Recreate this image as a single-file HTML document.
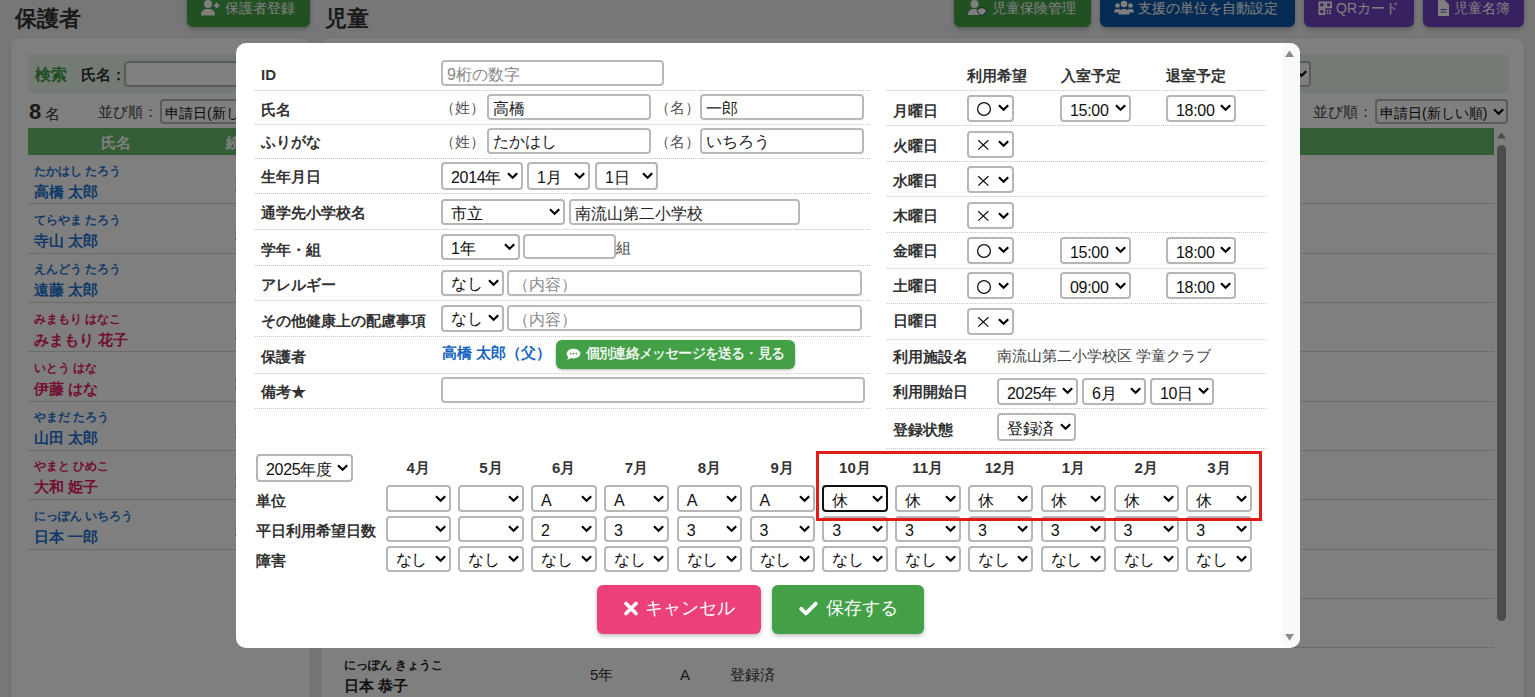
<!DOCTYPE html><html><head><meta charset="utf-8"><style>
*{margin:0;padding:0;box-sizing:border-box}
html,body{width:1535px;height:697px;overflow:hidden}
body{font-family:"Liberation Sans",sans-serif;background:#eeeeee;position:relative;color:#333}
.abs{position:absolute}
.t{position:absolute;height:30px;line-height:30px;margin-top:1.5px;white-space:nowrap;font-size:15px}
.c{text-align:center}
.b{font-weight:bold}
.card{position:absolute;background:#fff;border-radius:10px;box-shadow:0 1px 3px rgba(0,0,0,.12)}
.btn{position:absolute;border-radius:6px;color:#fff;font-size:15px;display:flex;align-items:center;justify-content:center;white-space:nowrap;box-shadow:0 2px 4px rgba(0,0,0,.25)}
.sel{position:absolute;border:2px solid #b6b6b6;border-radius:4px;background:#fff;font-size:16px;color:#111;white-space:nowrap;overflow:hidden}
.sel span{position:absolute;left:8px;top:calc(50% + 2.5px);transform:translateY(-50%);line-height:20px}
.sel .chev{position:absolute;right:3px;top:50%;margin-top:-3.8px}
.sel .mk{position:absolute;top:50%}
.sel span{letter-spacing:-0.3px}
.sel.focus{border-color:#111}
.inp{position:absolute;border:2px solid #b9b9b9;border-radius:4px;background:#fff;font-size:16px;color:#222;white-space:nowrap;overflow:hidden}
.inp span{position:absolute;left:4px;top:calc(50% + 2px);transform:translateY(-50%);line-height:20px}
.inp.ph span{color:#8a8a8a}
.dot{position:absolute;height:0;border-top:1px dotted #c4c4c4}
.sep{position:absolute;height:0;border-top:1px solid #d6d6d6}
#overlay{position:absolute;left:0;top:0;width:1535px;height:697px;background:rgba(0,0,0,.5)}
#modal{position:absolute;left:236px;top:43px;width:1064px;height:605px;background:#fff;border-radius:10px;overflow:hidden}
</style></head><body>
<div class="t b" style="left:15px;top:2px;font-size:22px;color:#333">保護者</div>
<div class="t b" style="left:325px;top:2px;font-size:22px;color:#333">児童</div>
<div class="btn" style="left:187px;top:-10px;width:123px;height:37px;background:#43a047"></div>
<svg class="abs" style="left:200.5px;top:0px" width="20" height="16" viewBox="0 0 20 16"><circle cx="7" cy="4" r="4" fill="#fff"/><path d="M0 15.5C0 10.5 2.5 9 7 9S14 10.5 14 15.5Z" fill="#fff"/><path d="M13 5.5h5.5M15.75 2.75v5.5" stroke="#fff" stroke-width="2.2"/></svg>
<div class="t" style="left:224.5px;top:-7px;margin-top:0;color:#fff;font-size:14px">保護者登録</div>
<div class="btn" style="left:954px;top:-10px;width:137px;height:37px;background:#43a047"></div>
<svg class="abs" style="left:967.5px;top:0px" width="20" height="16" viewBox="0 0 20 16"><circle cx="6.5" cy="4" r="4" fill="#fff"/><path d="M0 15C0 10.5 2.5 9 7 9L11 9L11 15Z" fill="#fff"/><path d="M13.8 7.5L18.5 9C18.5 12.5 16.5 14.5 13.8 15.5C11 14.5 9.2 12.5 9.2 9Z" fill="#fff" stroke="#24522a" stroke-width="1"/></svg>
<div class="t" style="left:992px;top:-7px;margin-top:0;color:#fff;font-size:14px">児童保険管理</div>
<div class="btn" style="left:1100px;top:-10px;width:195px;height:37px;background:#0b57a6"></div>
<svg class="abs" style="left:1113.5px;top:0px" width="20" height="16" viewBox="0 0 20 16"><circle cx="10" cy="4" r="3.3" fill="#fff"/><circle cx="3.5" cy="5.5" r="2.3" fill="#fff"/><circle cx="16.5" cy="5.5" r="2.3" fill="#fff"/><path d="M4.5 14.5C4.5 10.5 6.5 9 10 9S15.5 10.5 15.5 14.5Z" fill="#fff"/><path d="M0 12.5C0 10 1.2 9 3.5 9S6 9.5 6 10V12.5Z" fill="#fff"/><path d="M20 12.5C20 10 18.8 9 16.5 9S14 9.5 14 10V12.5Z" fill="#fff"/></svg>
<div class="t" style="left:1138px;top:-7px;margin-top:0;color:#fff;font-size:14px">支援の単位を自動設定</div>
<div class="btn" style="left:1304px;top:-10px;width:110px;height:37px;background:#6f42c1"></div>
<svg class="abs" style="left:1318px;top:0px" width="20" height="16" viewBox="0 0 20 16"><g transform="translate(0.5,1.5) scale(0.9)"><rect x="1" y="1" width="5.5" height="5.5" fill="none" stroke="#fff" stroke-width="2"/><rect x="8.5" y="1" width="5.5" height="5.5" fill="none" stroke="#fff" stroke-width="2"/><rect x="1" y="8.5" width="5.5" height="5.5" fill="none" stroke="#fff" stroke-width="2"/><rect x="9" y="9" width="2" height="2" fill="#fff"/><rect x="12" y="12" width="2" height="2" fill="#fff"/><rect x="12" y="9" width="2" height="2" fill="#fff"/><rect x="9" y="12" width="2" height="2" fill="#fff"/></g></svg>
<div class="t" style="left:1336px;top:-7px;margin-top:0;color:#fff;font-size:14px">QRカード</div>
<div class="btn" style="left:1423px;top:-10px;width:101px;height:37px;background:#6f42c1"></div>
<svg class="abs" style="left:1436.5px;top:0px" width="20" height="16" viewBox="0 0 20 16"><path d="M1 0H7.5L12 4.5V16H1Z" fill="#fff"/><path d="M3.5 9.5H9.5M3.5 12H9.5" stroke="#6f42c1" stroke-width="1.2"/></svg>
<div class="t" style="left:1454px;top:-7px;margin-top:0;color:#fff;font-size:14px">児童名簿</div>
<div class="card" style="left:11px;top:38px;width:299px;height:700px"></div>
<div class="abs" style="left:28px;top:54px;width:265px;height:39px;background:#e8f5e9;border-radius:4px"></div>
<div class="t b" style="left:35px;top:58px;color:#3f9b45;font-size:16px">検索</div>
<div class="t b" style="left:81px;top:58px;font-size:15px">氏名：</div>
<div class="abs" style="left:124px;top:61px;width:160px;height:26px;border:2px solid #b4b4b4;border-radius:4px;background:#fff"></div>
<div class="t " style="left:29px;top:95.5px;font-size:15px"><b style="font-size:22px">8</b> 名</div>
<div class="t " style="left:98px;top:95.5px;font-size:15px;color:#444">並び順：</div>
<div class="abs" style="left:160px;top:99px;width:140px;height:25px;border:2px solid #b4b4b4;border-radius:4px;background:#fff"></div>
<div class="t " style="left:165px;top:96px;font-size:14px;color:#111">申請日(新しい順)</div>
<div class="abs" style="left:28px;top:128px;width:265px;height:27px;background:#66bb6a"></div>
<div class="t c b" style="left:76px;top:126px;width:80px;color:#fff">氏名</div>
<div class="t b" style="left:226px;top:126px;color:#fff;font-size:15px">続柄</div>
<div class="t b" style="left:34px;top:154.1px;font-size:12px;color:#1f74d0">たかはし たろう</div>
<div class="t b" style="left:34px;top:175.1px;font-size:15px;color:#1f74d0">高橋 太郎</div>
<div class="t " style="left:234px;top:169.6px;font-size:14px;color:#1f74d0">1</div>
<div class="sep" style="left:28px;top:203.39999999999998px;width:265px"></div>
<div class="t b" style="left:34px;top:203.39999999999998px;font-size:12px;color:#1f74d0">てらやま たろう</div>
<div class="t b" style="left:34px;top:224.39999999999998px;font-size:15px;color:#1f74d0">寺山 太郎</div>
<div class="t " style="left:234px;top:218.89999999999998px;font-size:14px;color:#1f74d0">1</div>
<div class="sep" style="left:28px;top:252.7px;width:265px"></div>
<div class="t b" style="left:34px;top:252.7px;font-size:12px;color:#1f74d0">えんどう たろう</div>
<div class="t b" style="left:34px;top:273.7px;font-size:15px;color:#1f74d0">遠藤 太郎</div>
<div class="t " style="left:234px;top:268.2px;font-size:14px;color:#1f74d0">1</div>
<div class="sep" style="left:28px;top:302.0px;width:265px"></div>
<div class="t b" style="left:34px;top:302.0px;font-size:12px;color:#e52062">みまもり はなこ</div>
<div class="t b" style="left:34px;top:323.0px;font-size:15px;color:#e52062">みまもり 花子</div>
<div class="t " style="left:234px;top:317.5px;font-size:14px;color:#e52062">1</div>
<div class="sep" style="left:28px;top:351.3px;width:265px"></div>
<div class="t b" style="left:34px;top:351.29999999999995px;font-size:12px;color:#e52062">いとう はな</div>
<div class="t b" style="left:34px;top:372.29999999999995px;font-size:15px;color:#e52062">伊藤 はな</div>
<div class="t " style="left:234px;top:366.79999999999995px;font-size:14px;color:#e52062">1</div>
<div class="sep" style="left:28px;top:400.59999999999997px;width:265px"></div>
<div class="t b" style="left:34px;top:400.6px;font-size:12px;color:#1f74d0">やまだ たろう</div>
<div class="t b" style="left:34px;top:421.6px;font-size:15px;color:#1f74d0">山田 太郎</div>
<div class="t " style="left:234px;top:416.1px;font-size:14px;color:#1f74d0">1</div>
<div class="sep" style="left:28px;top:449.90000000000003px;width:265px"></div>
<div class="t b" style="left:34px;top:449.9px;font-size:12px;color:#e52062">やまと ひめこ</div>
<div class="t b" style="left:34px;top:470.9px;font-size:15px;color:#e52062">大和 姫子</div>
<div class="t " style="left:234px;top:465.4px;font-size:14px;color:#e52062">1</div>
<div class="sep" style="left:28px;top:499.2px;width:265px"></div>
<div class="t b" style="left:34px;top:499.19999999999993px;font-size:12px;color:#1f74d0">にっぽん いちろう</div>
<div class="t b" style="left:34px;top:520.1999999999999px;font-size:15px;color:#1f74d0">日本 一郎</div>
<div class="t " style="left:234px;top:514.6999999999999px;font-size:14px;color:#1f74d0">1</div>
<div class="sep" style="left:28px;top:548.4999999999999px;width:265px"></div>
<div class="card" style="left:321px;top:38px;width:1203px;height:700px"></div>
<div class="abs" style="left:338px;top:54px;width:1171px;height:39px;background:#e8f5e9;border-radius:4px"></div>
<div class="abs" style="left:1200px;top:60.5px;width:111px;height:26px;border:2px solid #b4b4b4;border-radius:4px;background:#fff"></div>
<div class="t " style="left:1313px;top:95.5px;font-size:15px;color:#444">並び順：</div>
<div class="abs" style="left:1375px;top:99px;width:133px;height:25px;border:2px solid #b4b4b4;border-radius:4px;background:#fff"></div>
<div class="t " style="left:1380px;top:96px;font-size:14px;color:#111">申請日(新しい順)</div>
<div class="abs" style="left:338px;top:128px;width:1156px;height:27px;background:#66bb6a"></div>
<div class="abs" style="left:1497px;top:145px;width:9px;height:476px;background:#999;border-radius:5px"></div>
<svg class="abs" style="left:1497px;top:132px" width="9" height="7"><polygon points="0,6.5 4.5,0.5 9,6.5" fill="#999"/></svg>
<svg class="abs" style="left:1296px;top:70px" width="11" height="8" viewBox="0 0 11 8"><polyline points="1.0,1.3 5.6,5.8 10.2,1.3" fill="none" stroke="#000" stroke-width="2.2"/></svg>
<svg class="abs" style="left:1493px;top:108px" width="11" height="8" viewBox="0 0 11 8"><polyline points="1.0,1.3 5.6,5.8 10.2,1.3" fill="none" stroke="#000" stroke-width="2.2"/></svg>
<div class="sep" style="left:338px;top:203.39999999999998px;width:1156px"></div>
<div class="sep" style="left:338px;top:252.7px;width:1156px"></div>
<div class="sep" style="left:338px;top:302.0px;width:1156px"></div>
<div class="sep" style="left:338px;top:351.3px;width:1156px"></div>
<div class="sep" style="left:338px;top:400.59999999999997px;width:1156px"></div>
<div class="sep" style="left:338px;top:449.90000000000003px;width:1156px"></div>
<div class="sep" style="left:338px;top:499.2px;width:1156px"></div>
<div class="sep" style="left:338px;top:548.4999999999999px;width:1156px"></div>
<div class="sep" style="left:338px;top:597.8px;width:1156px"></div>
<div class="sep" style="left:338px;top:647.0999999999999px;width:1156px"></div>
<div class="t b" style="left:344px;top:648.5px;font-size:12px;color:#222">にっぽん きょうこ</div>
<div class="t b" style="left:344px;top:669px;font-size:15px;color:#222">日本 恭子</div>
<div class="t " style="left:590px;top:658px;font-size:15px;color:#333">5年</div>
<div class="t " style="left:680px;top:658px;font-size:15px;color:#333">A</div>
<div class="t " style="left:730px;top:658px;font-size:15px;color:#333">登録済</div>
<div id="overlay"></div>
<div id="modal"><div class="abs" style="left:1046px;top:0;width:18px;height:602px;background:#f9f9f9"></div></div>
<svg class="abs" style="left:1285px;top:50px" width="9" height="8"><polygon points="0,7 4.5,0.5 9,7" fill="#8c8c8c"/></svg>
<svg class="abs" style="left:1285px;top:633px" width="9" height="8"><polygon points="0,1 4.5,7.5 9,1" fill="#8c8c8c"/></svg>
<div class="dot" style="left:255px;top:90px;width:615px"></div>
<div class="dot" style="left:255px;top:124px;width:615px"></div>
<div class="dot" style="left:255px;top:158px;width:615px"></div>
<div class="dot" style="left:255px;top:193px;width:615px"></div>
<div class="dot" style="left:255px;top:229px;width:615px"></div>
<div class="dot" style="left:255px;top:265px;width:615px"></div>
<div class="dot" style="left:255px;top:300px;width:615px"></div>
<div class="dot" style="left:255px;top:336px;width:615px"></div>
<div class="dot" style="left:255px;top:373px;width:615px"></div>
<div class="dot" style="left:255px;top:408px;width:615px"></div>
<div class="t b" style="left:261px;top:58px;">ID</div>
<div class="t b" style="left:261px;top:93px;">氏名</div>
<div class="t b" style="left:261px;top:125px;">ふりがな</div>
<div class="t b" style="left:261px;top:160.5px;">生年月日</div>
<div class="t b" style="left:261px;top:196px;">通学先小学校名</div>
<div class="t b" style="left:261px;top:233px;">学年・組</div>
<div class="t b" style="left:261px;top:268px;">アレルギー</div>
<div class="t b" style="left:261px;top:304px;">その他健康上の配慮事項</div>
<div class="t b" style="left:261px;top:340px;">保護者</div>
<div class="t b" style="left:261px;top:375px;">備考★</div>
<div class="inp ph" style="left:441px;top:60px;width:223px;height:26px"><span>9桁の数字</span></div>
<div class="t " style="left:448px;top:91px;color:#555;margin-left:-8px">（姓）</div>
<div class="inp" style="left:487px;top:94px;width:164px;height:26px"><span>高橋</span></div>
<div class="t " style="left:655px;top:91px;color:#555">（名）</div>
<div class="inp" style="left:700px;top:94px;width:164px;height:26px"><span>一郎</span></div>
<div class="t " style="left:448px;top:125px;color:#555;margin-left:-8px">（姓）</div>
<div class="inp" style="left:487px;top:128px;width:164px;height:26px"><span style="margin-top:-1.5px">たかはし</span></div>
<div class="t " style="left:655px;top:125px;color:#555">（名）</div>
<div class="inp" style="left:700px;top:128px;width:164px;height:26px"><span style="margin-top:-1.5px">いちろう</span></div>
<div class="sel " style="left:441px;top:162px;width:81.5px;height:27.5px"><span>2014年</span><svg class="chev" width="11" height="8" viewBox="0 0 11 8"><polyline points="1.0,1.3 5.6,5.8 10.2,1.3" fill="none" stroke="#000" stroke-width="2.2"/></svg></div>
<div class="sel " style="left:527px;top:162px;width:63px;height:27.5px"><span>1月</span><svg class="chev" width="11" height="8" viewBox="0 0 11 8"><polyline points="1.0,1.3 5.6,5.8 10.2,1.3" fill="none" stroke="#000" stroke-width="2.2"/></svg></div>
<div class="sel " style="left:595px;top:162px;width:63px;height:27.5px"><span>1日</span><svg class="chev" width="11" height="8" viewBox="0 0 11 8"><polyline points="1.0,1.3 5.6,5.8 10.2,1.3" fill="none" stroke="#000" stroke-width="2.2"/></svg></div>
<div class="sel " style="left:441px;top:198.5px;width:124px;height:26.5px"><span>市立</span><svg class="chev" width="11" height="8" viewBox="0 0 11 8"><polyline points="1.0,1.3 5.6,5.8 10.2,1.3" fill="none" stroke="#000" stroke-width="2.2"/></svg></div>
<div class="inp" style="left:569px;top:199px;width:231px;height:25.5px"><span>南流山第二小学校</span></div>
<div class="sel " style="left:441px;top:233.5px;width:78.5px;height:26.80000000000001px"><span>1年</span><svg class="chev" width="11" height="8" viewBox="0 0 11 8"><polyline points="1.0,1.3 5.6,5.8 10.2,1.3" fill="none" stroke="#000" stroke-width="2.2"/></svg></div>
<div class="inp" style="left:523px;top:234.3px;width:92.5px;height:25.19999999999999px"><span></span></div>
<div class="t " style="left:616px;top:231px;color:#444">組</div>
<div class="sel " style="left:441px;top:269.5px;width:62.5px;height:26.5px"><span style="margin-top:-1.5px">なし</span><svg class="chev" width="11" height="8" viewBox="0 0 11 8"><polyline points="1.0,1.3 5.6,5.8 10.2,1.3" fill="none" stroke="#000" stroke-width="2.2"/></svg></div>
<div class="inp ph" style="left:507px;top:270px;width:354.5px;height:25.5px"><span>（内容）</span></div>
<div class="sel " style="left:441px;top:305px;width:62.5px;height:26.5px"><span style="margin-top:-1.5px">なし</span><svg class="chev" width="11" height="8" viewBox="0 0 11 8"><polyline points="1.0,1.3 5.6,5.8 10.2,1.3" fill="none" stroke="#000" stroke-width="2.2"/></svg></div>
<div class="inp ph" style="left:507px;top:305px;width:354.5px;height:25.5px"><span>（内容）</span></div>
<div class="t b" style="left:442px;top:336.5px;color:#1565c0">高橋 太郎（父）</div>
<div class="btn" style="left:556px;top:340px;width:239px;height:29px;background:#43a047;box-shadow:0 1px 3px rgba(0,0,0,.3)"></div>
<svg class="abs" style="left:566px;top:348px" width="15" height="12" viewBox="0 0 15 12"><path d="M7.5 0.8C11.4 0.8 14.3 3 14.3 5.6C14.3 8.3 11.4 10.4 7.5 10.4C6.6 10.4 5.8 10.3 5 10.1C4 11 2.6 11.6 0.8 11.7C1.8 10.9 2.3 10 2.4 9.2C1.3 8.3 0.7 7 0.7 5.6C0.7 3 3.6 0.8 7.5 0.8Z" fill="#fff"/><circle cx="4.6" cy="5.7" r="0.9" fill="#43a047"/><circle cx="7.5" cy="5.7" r="0.9" fill="#43a047"/><circle cx="10.4" cy="5.7" r="0.9" fill="#43a047"/></svg>
<div class="t" style="left:586px;top:338px;margin-top:0;color:#fff;font-size:14px;letter-spacing:-0.8px;-webkit-text-stroke:0.3px #fff">個別連絡メッセージを送る・見る</div>
<div class="inp" style="left:441px;top:377px;width:423.5px;height:25.5px"><span></span></div>
<div class="dot" style="left:886.5px;top:90px;width:379.5px"></div>
<div class="dot" style="left:886.5px;top:125px;width:379.5px"></div>
<div class="dot" style="left:886.5px;top:161px;width:379.5px"></div>
<div class="dot" style="left:886.5px;top:196px;width:379.5px"></div>
<div class="dot" style="left:886.5px;top:232px;width:379.5px"></div>
<div class="dot" style="left:886.5px;top:268px;width:379.5px"></div>
<div class="dot" style="left:886.5px;top:303px;width:379.5px"></div>
<div class="dot" style="left:886.5px;top:339px;width:379.5px"></div>
<div class="dot" style="left:886.5px;top:373px;width:379.5px"></div>
<div class="dot" style="left:886.5px;top:408px;width:379.5px"></div>
<div class="dot" style="left:886.5px;top:448px;width:379.5px"></div>
<div class="t c b" style="left:947.0px;top:59px;width:100px">利用希望</div>
<div class="t c b" style="left:1041.0px;top:59px;width:100px">入室予定</div>
<div class="t c b" style="left:1146.0px;top:59px;width:100px">退室予定</div>
<div class="t b" style="left:893px;top:94.2px;">月曜日</div>
<div class="sel " style="left:966.5px;top:94.6px;width:47.0px;height:27.0px"><svg class="mk" width="16" height="16" style="left:7px;margin-top:-6.9px"><circle cx="8" cy="8" r="6.4" fill="none" stroke="#111" stroke-width="1.3"/></svg><svg class="chev" width="11" height="8" viewBox="0 0 11 8"><polyline points="1.0,1.3 5.6,5.8 10.2,1.3" fill="none" stroke="#000" stroke-width="2.2"/></svg></div>
<div class="sel " style="left:1060px;top:94.6px;width:71px;height:27.0px"><span>15:00</span><svg class="chev" width="11" height="8" viewBox="0 0 11 8"><polyline points="1.0,1.3 5.6,5.8 10.2,1.3" fill="none" stroke="#000" stroke-width="2.2"/></svg></div>
<div class="sel " style="left:1166px;top:94.6px;width:69.5px;height:27.0px"><span>18:00</span><svg class="chev" width="11" height="8" viewBox="0 0 11 8"><polyline points="1.0,1.3 5.6,5.8 10.2,1.3" fill="none" stroke="#000" stroke-width="2.2"/></svg></div>
<div class="t b" style="left:893px;top:129.3px;">火曜日</div>
<div class="sel " style="left:966.5px;top:130.7px;width:47.0px;height:27.0px"><svg class="mk" width="13" height="12" style="left:8.5px;margin-top:-5.2px"><path d="M1.2 1.2L11.4 10.6M11.4 1.2L1.2 10.6" fill="none" stroke="#111" stroke-width="1.25"/></svg><svg class="chev" width="11" height="8" viewBox="0 0 11 8"><polyline points="1.0,1.3 5.6,5.8 10.2,1.3" fill="none" stroke="#000" stroke-width="2.2"/></svg></div>
<div class="t b" style="left:893px;top:164.4px;">水曜日</div>
<div class="sel " style="left:966.5px;top:166.2px;width:47.0px;height:27.0px"><svg class="mk" width="13" height="12" style="left:8.5px;margin-top:-5.2px"><path d="M1.2 1.2L11.4 10.6M11.4 1.2L1.2 10.6" fill="none" stroke="#111" stroke-width="1.25"/></svg><svg class="chev" width="11" height="8" viewBox="0 0 11 8"><polyline points="1.0,1.3 5.6,5.8 10.2,1.3" fill="none" stroke="#000" stroke-width="2.2"/></svg></div>
<div class="t b" style="left:893px;top:199.5px;">木曜日</div>
<div class="sel " style="left:966.5px;top:201.8px;width:47.0px;height:27.0px"><svg class="mk" width="13" height="12" style="left:8.5px;margin-top:-5.2px"><path d="M1.2 1.2L11.4 10.6M11.4 1.2L1.2 10.6" fill="none" stroke="#111" stroke-width="1.25"/></svg><svg class="chev" width="11" height="8" viewBox="0 0 11 8"><polyline points="1.0,1.3 5.6,5.8 10.2,1.3" fill="none" stroke="#000" stroke-width="2.2"/></svg></div>
<div class="t b" style="left:893px;top:234.60000000000002px;">金曜日</div>
<div class="sel " style="left:966.5px;top:236.7px;width:47.0px;height:27.0px"><svg class="mk" width="16" height="16" style="left:7px;margin-top:-6.9px"><circle cx="8" cy="8" r="6.4" fill="none" stroke="#111" stroke-width="1.3"/></svg><svg class="chev" width="11" height="8" viewBox="0 0 11 8"><polyline points="1.0,1.3 5.6,5.8 10.2,1.3" fill="none" stroke="#000" stroke-width="2.2"/></svg></div>
<div class="sel " style="left:1060px;top:236.7px;width:71px;height:27.0px"><span>15:00</span><svg class="chev" width="11" height="8" viewBox="0 0 11 8"><polyline points="1.0,1.3 5.6,5.8 10.2,1.3" fill="none" stroke="#000" stroke-width="2.2"/></svg></div>
<div class="sel " style="left:1166px;top:236.7px;width:69.5px;height:27.0px"><span>18:00</span><svg class="chev" width="11" height="8" viewBox="0 0 11 8"><polyline points="1.0,1.3 5.6,5.8 10.2,1.3" fill="none" stroke="#000" stroke-width="2.2"/></svg></div>
<div class="t b" style="left:893px;top:269.7px;">土曜日</div>
<div class="sel " style="left:966.5px;top:272.3px;width:47.0px;height:27.0px"><svg class="mk" width="16" height="16" style="left:7px;margin-top:-6.9px"><circle cx="8" cy="8" r="6.4" fill="none" stroke="#111" stroke-width="1.3"/></svg><svg class="chev" width="11" height="8" viewBox="0 0 11 8"><polyline points="1.0,1.3 5.6,5.8 10.2,1.3" fill="none" stroke="#000" stroke-width="2.2"/></svg></div>
<div class="sel " style="left:1060px;top:272.3px;width:71px;height:27.0px"><span>09:00</span><svg class="chev" width="11" height="8" viewBox="0 0 11 8"><polyline points="1.0,1.3 5.6,5.8 10.2,1.3" fill="none" stroke="#000" stroke-width="2.2"/></svg></div>
<div class="sel " style="left:1166px;top:272.3px;width:69.5px;height:27.0px"><span>18:00</span><svg class="chev" width="11" height="8" viewBox="0 0 11 8"><polyline points="1.0,1.3 5.6,5.8 10.2,1.3" fill="none" stroke="#000" stroke-width="2.2"/></svg></div>
<div class="t b" style="left:893px;top:304.8px;">日曜日</div>
<div class="sel " style="left:966.5px;top:308.1px;width:47.0px;height:27.0px"><svg class="mk" width="13" height="12" style="left:8.5px;margin-top:-5.2px"><path d="M1.2 1.2L11.4 10.6M11.4 1.2L1.2 10.6" fill="none" stroke="#111" stroke-width="1.25"/></svg><svg class="chev" width="11" height="8" viewBox="0 0 11 8"><polyline points="1.0,1.3 5.6,5.8 10.2,1.3" fill="none" stroke="#000" stroke-width="2.2"/></svg></div>
<div class="t b" style="left:893px;top:340px;">利用施設名</div>
<div class="t " style="left:997px;top:339.5px;color:#444">南流山第二小学校区 学童クラブ</div>
<div class="t b" style="left:893px;top:375.5px;">利用開始日</div>
<div class="sel " style="left:997px;top:377.5px;width:81px;height:27.0px"><span>2025年</span><svg class="chev" width="11" height="8" viewBox="0 0 11 8"><polyline points="1.0,1.3 5.6,5.8 10.2,1.3" fill="none" stroke="#000" stroke-width="2.2"/></svg></div>
<div class="sel " style="left:1082px;top:377.5px;width:64px;height:27.0px"><span>6月</span><svg class="chev" width="11" height="8" viewBox="0 0 11 8"><polyline points="1.0,1.3 5.6,5.8 10.2,1.3" fill="none" stroke="#000" stroke-width="2.2"/></svg></div>
<div class="sel " style="left:1150px;top:377.5px;width:64px;height:27.0px"><span>10日</span><svg class="chev" width="11" height="8" viewBox="0 0 11 8"><polyline points="1.0,1.3 5.6,5.8 10.2,1.3" fill="none" stroke="#000" stroke-width="2.2"/></svg></div>
<div class="t b" style="left:893px;top:413px;">登録状態</div>
<div class="sel " style="left:997px;top:413px;width:78.5px;height:27.5px"><span>登録済</span><svg class="chev" width="11" height="8" viewBox="0 0 11 8"><polyline points="1.0,1.3 5.6,5.8 10.2,1.3" fill="none" stroke="#000" stroke-width="2.2"/></svg></div>
<div class="sel " style="left:256px;top:454px;width:96.5px;height:27.5px"><span>2025年度</span><svg class="chev" width="11" height="8" viewBox="0 0 11 8"><polyline points="1.0,1.3 5.6,5.8 10.2,1.3" fill="none" stroke="#000" stroke-width="2.2"/></svg></div>
<div class="t c b" style="left:388.1px;top:451px;width:60px">4月</div>
<div class="sel " style="left:385.5px;top:485.2px;width:65.60000000000002px;height:27.000000000000057px"><span></span><svg class="chev" width="11" height="8" viewBox="0 0 11 8"><polyline points="1.0,1.3 5.6,5.8 10.2,1.3" fill="none" stroke="#000" stroke-width="2.2"/></svg></div>
<div class="sel " style="left:385.5px;top:515.5px;width:65.60000000000002px;height:26.799999999999955px"><span></span><svg class="chev" width="11" height="8" viewBox="0 0 11 8"><polyline points="1.0,1.3 5.6,5.8 10.2,1.3" fill="none" stroke="#000" stroke-width="2.2"/></svg></div>
<div class="sel " style="left:385.5px;top:545.5px;width:65.60000000000002px;height:26.799999999999955px"><span style="margin-top:-1.5px">なし</span><svg class="chev" width="11" height="8" viewBox="0 0 11 8"><polyline points="1.0,1.3 5.6,5.8 10.2,1.3" fill="none" stroke="#000" stroke-width="2.2"/></svg></div>
<div class="t c b" style="left:460.90000000000003px;top:451px;width:60px">5月</div>
<div class="sel " style="left:458.3px;top:485.2px;width:65.60000000000008px;height:27.000000000000057px"><span></span><svg class="chev" width="11" height="8" viewBox="0 0 11 8"><polyline points="1.0,1.3 5.6,5.8 10.2,1.3" fill="none" stroke="#000" stroke-width="2.2"/></svg></div>
<div class="sel " style="left:458.3px;top:515.5px;width:65.60000000000008px;height:26.799999999999955px"><span></span><svg class="chev" width="11" height="8" viewBox="0 0 11 8"><polyline points="1.0,1.3 5.6,5.8 10.2,1.3" fill="none" stroke="#000" stroke-width="2.2"/></svg></div>
<div class="sel " style="left:458.3px;top:545.5px;width:65.60000000000008px;height:26.799999999999955px"><span style="margin-top:-1.5px">なし</span><svg class="chev" width="11" height="8" viewBox="0 0 11 8"><polyline points="1.0,1.3 5.6,5.8 10.2,1.3" fill="none" stroke="#000" stroke-width="2.2"/></svg></div>
<div class="t c b" style="left:533.7px;top:451px;width:60px">6月</div>
<div class="sel " style="left:531.1px;top:485.2px;width:65.60000000000002px;height:27.000000000000057px"><span>A</span><svg class="chev" width="11" height="8" viewBox="0 0 11 8"><polyline points="1.0,1.3 5.6,5.8 10.2,1.3" fill="none" stroke="#000" stroke-width="2.2"/></svg></div>
<div class="sel " style="left:531.1px;top:515.5px;width:65.60000000000002px;height:26.799999999999955px"><span>2</span><svg class="chev" width="11" height="8" viewBox="0 0 11 8"><polyline points="1.0,1.3 5.6,5.8 10.2,1.3" fill="none" stroke="#000" stroke-width="2.2"/></svg></div>
<div class="sel " style="left:531.1px;top:545.5px;width:65.60000000000002px;height:26.799999999999955px"><span style="margin-top:-1.5px">なし</span><svg class="chev" width="11" height="8" viewBox="0 0 11 8"><polyline points="1.0,1.3 5.6,5.8 10.2,1.3" fill="none" stroke="#000" stroke-width="2.2"/></svg></div>
<div class="t c b" style="left:606.5px;top:451px;width:60px">7月</div>
<div class="sel " style="left:603.9px;top:485.2px;width:65.60000000000002px;height:27.000000000000057px"><span>A</span><svg class="chev" width="11" height="8" viewBox="0 0 11 8"><polyline points="1.0,1.3 5.6,5.8 10.2,1.3" fill="none" stroke="#000" stroke-width="2.2"/></svg></div>
<div class="sel " style="left:603.9px;top:515.5px;width:65.60000000000002px;height:26.799999999999955px"><span>3</span><svg class="chev" width="11" height="8" viewBox="0 0 11 8"><polyline points="1.0,1.3 5.6,5.8 10.2,1.3" fill="none" stroke="#000" stroke-width="2.2"/></svg></div>
<div class="sel " style="left:603.9px;top:545.5px;width:65.60000000000002px;height:26.799999999999955px"><span style="margin-top:-1.5px">なし</span><svg class="chev" width="11" height="8" viewBox="0 0 11 8"><polyline points="1.0,1.3 5.6,5.8 10.2,1.3" fill="none" stroke="#000" stroke-width="2.2"/></svg></div>
<div class="t c b" style="left:679.3px;top:451px;width:60px">8月</div>
<div class="sel " style="left:676.6999999999999px;top:485.2px;width:65.60000000000002px;height:27.000000000000057px"><span>A</span><svg class="chev" width="11" height="8" viewBox="0 0 11 8"><polyline points="1.0,1.3 5.6,5.8 10.2,1.3" fill="none" stroke="#000" stroke-width="2.2"/></svg></div>
<div class="sel " style="left:676.6999999999999px;top:515.5px;width:65.60000000000002px;height:26.799999999999955px"><span>3</span><svg class="chev" width="11" height="8" viewBox="0 0 11 8"><polyline points="1.0,1.3 5.6,5.8 10.2,1.3" fill="none" stroke="#000" stroke-width="2.2"/></svg></div>
<div class="sel " style="left:676.6999999999999px;top:545.5px;width:65.60000000000002px;height:26.799999999999955px"><span style="margin-top:-1.5px">なし</span><svg class="chev" width="11" height="8" viewBox="0 0 11 8"><polyline points="1.0,1.3 5.6,5.8 10.2,1.3" fill="none" stroke="#000" stroke-width="2.2"/></svg></div>
<div class="t c b" style="left:752.1px;top:451px;width:60px">9月</div>
<div class="sel " style="left:749.5px;top:485.2px;width:65.60000000000002px;height:27.000000000000057px"><span>A</span><svg class="chev" width="11" height="8" viewBox="0 0 11 8"><polyline points="1.0,1.3 5.6,5.8 10.2,1.3" fill="none" stroke="#000" stroke-width="2.2"/></svg></div>
<div class="sel " style="left:749.5px;top:515.5px;width:65.60000000000002px;height:26.799999999999955px"><span>3</span><svg class="chev" width="11" height="8" viewBox="0 0 11 8"><polyline points="1.0,1.3 5.6,5.8 10.2,1.3" fill="none" stroke="#000" stroke-width="2.2"/></svg></div>
<div class="sel " style="left:749.5px;top:545.5px;width:65.60000000000002px;height:26.799999999999955px"><span style="margin-top:-1.5px">なし</span><svg class="chev" width="11" height="8" viewBox="0 0 11 8"><polyline points="1.0,1.3 5.6,5.8 10.2,1.3" fill="none" stroke="#000" stroke-width="2.2"/></svg></div>
<div class="t c b" style="left:824.9px;top:451px;width:60px">10月</div>
<div class="sel focus" style="left:822.3px;top:485.2px;width:65.60000000000002px;height:27.000000000000057px"><span>休</span><svg class="chev" width="11" height="8" viewBox="0 0 11 8"><polyline points="1.0,1.3 5.6,5.8 10.2,1.3" fill="none" stroke="#000" stroke-width="2.2"/></svg></div>
<div class="sel " style="left:822.3px;top:515.5px;width:65.60000000000002px;height:26.799999999999955px"><span>3</span><svg class="chev" width="11" height="8" viewBox="0 0 11 8"><polyline points="1.0,1.3 5.6,5.8 10.2,1.3" fill="none" stroke="#000" stroke-width="2.2"/></svg></div>
<div class="sel " style="left:822.3px;top:545.5px;width:65.60000000000002px;height:26.799999999999955px"><span style="margin-top:-1.5px">なし</span><svg class="chev" width="11" height="8" viewBox="0 0 11 8"><polyline points="1.0,1.3 5.6,5.8 10.2,1.3" fill="none" stroke="#000" stroke-width="2.2"/></svg></div>
<div class="t c b" style="left:897.7px;top:451px;width:60px">11月</div>
<div class="sel " style="left:895.1px;top:485.2px;width:65.60000000000002px;height:27.000000000000057px"><span>休</span><svg class="chev" width="11" height="8" viewBox="0 0 11 8"><polyline points="1.0,1.3 5.6,5.8 10.2,1.3" fill="none" stroke="#000" stroke-width="2.2"/></svg></div>
<div class="sel " style="left:895.1px;top:515.5px;width:65.60000000000002px;height:26.799999999999955px"><span>3</span><svg class="chev" width="11" height="8" viewBox="0 0 11 8"><polyline points="1.0,1.3 5.6,5.8 10.2,1.3" fill="none" stroke="#000" stroke-width="2.2"/></svg></div>
<div class="sel " style="left:895.1px;top:545.5px;width:65.60000000000002px;height:26.799999999999955px"><span style="margin-top:-1.5px">なし</span><svg class="chev" width="11" height="8" viewBox="0 0 11 8"><polyline points="1.0,1.3 5.6,5.8 10.2,1.3" fill="none" stroke="#000" stroke-width="2.2"/></svg></div>
<div class="t c b" style="left:970.5px;top:451px;width:60px">12月</div>
<div class="sel " style="left:967.9px;top:485.2px;width:65.60000000000002px;height:27.000000000000057px"><span>休</span><svg class="chev" width="11" height="8" viewBox="0 0 11 8"><polyline points="1.0,1.3 5.6,5.8 10.2,1.3" fill="none" stroke="#000" stroke-width="2.2"/></svg></div>
<div class="sel " style="left:967.9px;top:515.5px;width:65.60000000000002px;height:26.799999999999955px"><span>3</span><svg class="chev" width="11" height="8" viewBox="0 0 11 8"><polyline points="1.0,1.3 5.6,5.8 10.2,1.3" fill="none" stroke="#000" stroke-width="2.2"/></svg></div>
<div class="sel " style="left:967.9px;top:545.5px;width:65.60000000000002px;height:26.799999999999955px"><span style="margin-top:-1.5px">なし</span><svg class="chev" width="11" height="8" viewBox="0 0 11 8"><polyline points="1.0,1.3 5.6,5.8 10.2,1.3" fill="none" stroke="#000" stroke-width="2.2"/></svg></div>
<div class="t c b" style="left:1043.3px;top:451px;width:60px">1月</div>
<div class="sel " style="left:1040.7px;top:485.2px;width:65.59999999999991px;height:27.000000000000057px"><span>休</span><svg class="chev" width="11" height="8" viewBox="0 0 11 8"><polyline points="1.0,1.3 5.6,5.8 10.2,1.3" fill="none" stroke="#000" stroke-width="2.2"/></svg></div>
<div class="sel " style="left:1040.7px;top:515.5px;width:65.59999999999991px;height:26.799999999999955px"><span>3</span><svg class="chev" width="11" height="8" viewBox="0 0 11 8"><polyline points="1.0,1.3 5.6,5.8 10.2,1.3" fill="none" stroke="#000" stroke-width="2.2"/></svg></div>
<div class="sel " style="left:1040.7px;top:545.5px;width:65.59999999999991px;height:26.799999999999955px"><span style="margin-top:-1.5px">なし</span><svg class="chev" width="11" height="8" viewBox="0 0 11 8"><polyline points="1.0,1.3 5.6,5.8 10.2,1.3" fill="none" stroke="#000" stroke-width="2.2"/></svg></div>
<div class="t c b" style="left:1116.1px;top:451px;width:60px">2月</div>
<div class="sel " style="left:1113.5px;top:485.2px;width:65.59999999999991px;height:27.000000000000057px"><span>休</span><svg class="chev" width="11" height="8" viewBox="0 0 11 8"><polyline points="1.0,1.3 5.6,5.8 10.2,1.3" fill="none" stroke="#000" stroke-width="2.2"/></svg></div>
<div class="sel " style="left:1113.5px;top:515.5px;width:65.59999999999991px;height:26.799999999999955px"><span>3</span><svg class="chev" width="11" height="8" viewBox="0 0 11 8"><polyline points="1.0,1.3 5.6,5.8 10.2,1.3" fill="none" stroke="#000" stroke-width="2.2"/></svg></div>
<div class="sel " style="left:1113.5px;top:545.5px;width:65.59999999999991px;height:26.799999999999955px"><span style="margin-top:-1.5px">なし</span><svg class="chev" width="11" height="8" viewBox="0 0 11 8"><polyline points="1.0,1.3 5.6,5.8 10.2,1.3" fill="none" stroke="#000" stroke-width="2.2"/></svg></div>
<div class="t c b" style="left:1188.9px;top:451px;width:60px">3月</div>
<div class="sel " style="left:1186.3000000000002px;top:485.2px;width:65.59999999999991px;height:27.000000000000057px"><span>休</span><svg class="chev" width="11" height="8" viewBox="0 0 11 8"><polyline points="1.0,1.3 5.6,5.8 10.2,1.3" fill="none" stroke="#000" stroke-width="2.2"/></svg></div>
<div class="sel " style="left:1186.3000000000002px;top:515.5px;width:65.59999999999991px;height:26.799999999999955px"><span>3</span><svg class="chev" width="11" height="8" viewBox="0 0 11 8"><polyline points="1.0,1.3 5.6,5.8 10.2,1.3" fill="none" stroke="#000" stroke-width="2.2"/></svg></div>
<div class="sel " style="left:1186.3000000000002px;top:545.5px;width:65.59999999999991px;height:26.799999999999955px"><span style="margin-top:-1.5px">なし</span><svg class="chev" width="11" height="8" viewBox="0 0 11 8"><polyline points="1.0,1.3 5.6,5.8 10.2,1.3" fill="none" stroke="#000" stroke-width="2.2"/></svg></div>
<div class="t b" style="left:256px;top:484px;">単位</div>
<div class="t b" style="left:256px;top:514px;">平日利用希望日数</div>
<div class="t b" style="left:256px;top:544px;">障害</div>
<div class="abs" style="left:816px;top:450.5px;width:445.5px;height:70px;border:3.6px solid #e21b1b"></div>
<div class="btn" style="left:597px;top:585px;width:164px;height:49px;background:#ec407a"></div>
<svg class="abs" style="left:623px;top:601px" width="16" height="15" viewBox="0 0 16 15"><path d="M3 2.5L13 12.5M13 2.5L3 12.5" stroke="#fff" stroke-width="3.6" stroke-linecap="round"/></svg>
<div class="t" style="left:645px;top:593px;margin-top:0;color:#fff;font-size:18px">キャンセル</div>
<div class="btn" style="left:772px;top:585px;width:152px;height:49px;background:#43a047"></div>
<svg class="abs" style="left:799px;top:601px" width="19" height="15" viewBox="0 0 19 15"><path d="M2.2 7.8L7 12.4L16.8 2.6" fill="none" stroke="#fff" stroke-width="3.8" stroke-linecap="round" stroke-linejoin="round"/></svg>
<div class="t" style="left:826px;top:593px;margin-top:0;color:#fff;font-size:18px">保存する</div>
</body></html>
